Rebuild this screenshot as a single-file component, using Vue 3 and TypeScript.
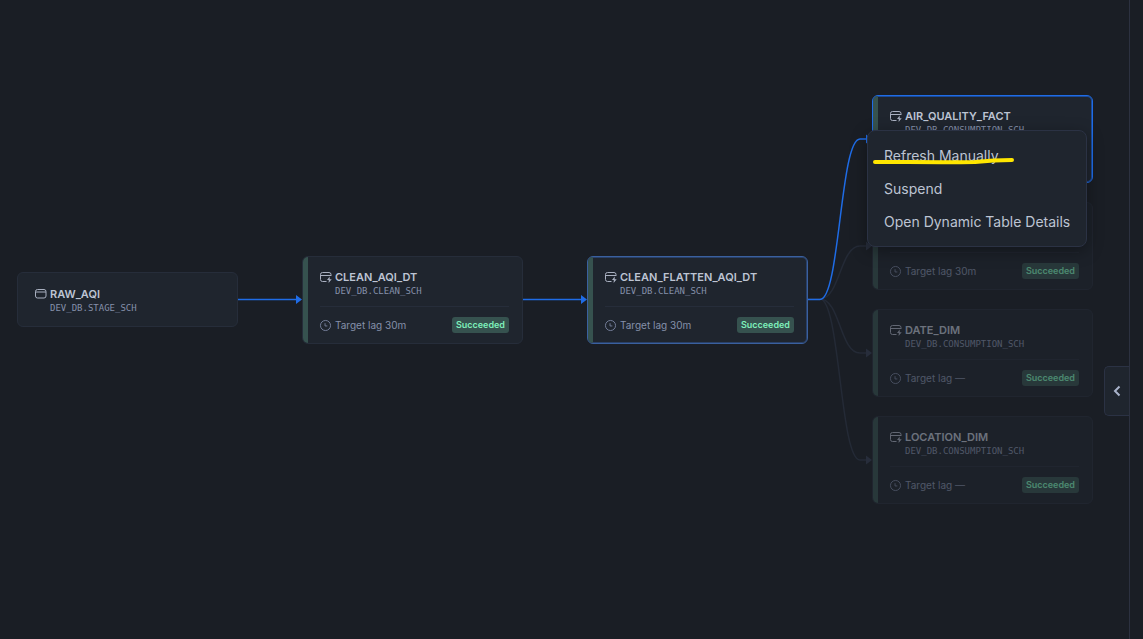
<script setup lang="ts">
interface TableNode {
  id: number
  kind: 'table' | 'dynamic'
  x: number
  y: number
  name?: string
  schema?: string
  lag?: string
  state?: 'active' | 'selected' | 'faded'
}

const nodes: TableNode[] = [
  { id: 1, kind: 'table', name: 'RAW_AQI', schema: 'DEV_DB.STAGE_SCH', x: 17, y: 272 },
  { id: 2, kind: 'dynamic', name: 'CLEAN_AQI_DT', schema: 'DEV_DB.CLEAN_SCH', x: 302, y: 256, lag: '30m' },
  { id: 3, kind: 'dynamic', name: 'CLEAN_FLATTEN_AQI_DT', schema: 'DEV_DB.CLEAN_SCH', x: 587, y: 256, lag: '30m', state: 'active' },
  { id: 4, kind: 'dynamic', name: 'AIR_QUALITY_FACT', schema: 'DEV_DB.CONSUMPTION_SCH', x: 872, y: 95, state: 'selected' },
  { id: 5, kind: 'dynamic', x: 872, y: 202, lag: '30m', state: 'faded' },
  { id: 6, kind: 'dynamic', name: 'DATE_DIM', schema: 'DEV_DB.CONSUMPTION_SCH', x: 872, y: 309, lag: '—', state: 'faded' },
  { id: 7, kind: 'dynamic', name: 'LOCATION_DIM', schema: 'DEV_DB.CONSUMPTION_SCH', x: 872, y: 416, lag: '—', state: 'faded' },
]

const actions = ['Refresh Manually', 'Suspend', 'Open Dynamic Table Details']

const place = (n: TableNode) => ({ left: `${n.x}px`, top: `${n.y}px` })
</script>

<template>
  <div class="app">
    <main class="canvas">
      <svg class="edges" aria-hidden="true">
        <g class="edge dim">
          <path d="M808 299H820C840 299 840 246 860 246H867" />
          <path d="M808 299H820C840 299 840 353 860 353H867" />
          <path d="M808 299H820C840 299 840 460 860 460H867" />
          <path class="head" d="M866 241.500L872 246L866 250.500ZM866 348.500L872 353L866 357.500ZM866 455.500L872 460L866 464.500Z" />
        </g>
        <g class="edge">
          <path d="M238 299.500H298" />
          <path d="M523 299.500H583" />
          <path d="M808 299.500H820C840 299.500 840 139 860 139H867" />
          <path class="head" d="M296 295L302 299.500L296 304ZM581 295L587 299.500L581 304ZM866 134.500L872 139L866 143.500Z" />
        </g>
      </svg>

      <article
        v-for="n in nodes"
        :key="n.id"
        class="node"
        :class="[n.kind, n.state]"
        :style="place(n)"
      >
        <header v-if="n.name" class="head-row">
          <svg class="icon" viewBox="0 0 12 12" aria-hidden="true">
            <template v-if="n.kind === 'dynamic'">
              <path d="M6.500 10.500H2.500Q.5 10.500 .5 8.500V3.500Q.5 1.500 2.500 1.500H9Q11 1.500 11 3.500V5M.5 4.500H11" />
              <path class="bolt" d="M9.700 5.500L7 9H8.800L8.600 12L11.700 8.200H9.700Z" />
            </template>
            <template v-else>
              <rect x=".5" y="1.500" width="10.500" height="8.500" rx="2" />
              <path d="M.5 4H11" />
            </template>
          </svg>
          <h2>{{ n.name }}</h2>
        </header>
        <p v-if="n.schema" class="schema">{{ n.schema }}</p>
        <footer v-if="n.lag" class="foot-row">
          <svg class="icon clock" viewBox="0 0 12 12" aria-hidden="true">
            <circle cx="6" cy="6" r="5.500" />
            <path d="M5.500 3.500V6.500H8" />
          </svg>
          <span class="lag">Target lag {{ n.lag }}</span>
          <span class="badge">Succeeded</span>
        </footer>
      </article>

      <div class="menu" role="menu">
        <button v-for="a in actions" :key="a" type="button" role="menuitem">{{ a }}</button>
        <svg class="marker" viewBox="0 0 146 10" aria-hidden="true">
          <path d="M4 7C35 7 75 7.500 104 7C118 5.500 128 5 141 5" />
        </svg>
      </div>

      <button class="expand" type="button" aria-label="Expand panel">
        <svg viewBox="0 0 8 12" aria-hidden="true"><path d="M6.500 1.500L2 6L6.500 10.500" /></svg>
      </button>
    </main>
    <aside class="panel"></aside>
  </div>
</template>

<style>
body {
  background: #1a1e25;
}
</style>

<style scoped>
.app {
  display: flex;
  min-height: 100vh;
  background: #1a1e25;
  color: #bdc4d3;
  font-family: Inter, "Liberation Sans", sans-serif;
}

.canvas {
  position: relative;
  flex: 1;
  overflow: hidden;
}

.panel {
  box-sizing: border-box;
  width: 14px;
  border-left: 1px solid #2c3140;
}

.edges {
  position: absolute;
  inset: 0;
  width: 100%;
  height: 100%;
}

.edge {
  fill: none;
  stroke: #1f6ce6;
  stroke-width: 1.5px;
}

.edge .head {
  fill: #1f6ce6;
  stroke: none;
}

.edge.dim {
  stroke: #242a36;
}

.edge.dim .head {
  fill: #272d3b;
}

.node {
  position: absolute;
  display: flex;
  flex-direction: column;
  box-sizing: border-box;
  width: 221px;
  padding: 14px 13px 11px 17px;
  overflow: hidden;
  background: #1f252e;
  border: 1px solid #262d3a;
  border-radius: 6px;
}

.node.dynamic {
  min-height: 88px;
  padding-top: 13px;
  padding-bottom: 10px;
}

.node.dynamic::before {
  position: absolute;
  inset: 0 auto 0 0;
  width: 5px;
  background: #36524f;
  content: "";
}

.node.active {
  border-color: #3a609f;
  box-shadow: 0 0 0 1px #294068 inset;
}

.node.selected {
  border-color: #1f6ce6;
  box-shadow: 0 0 0 1px #1b4a98 inset;
}

.node.faded {
  opacity: 0.5;
}

.head-row,
.foot-row {
  display: flex;
  align-items: center;
}

h2 {
  margin: 0;
  font-size: 11px;
  font-weight: 600;
  line-height: 14px;
}

.icon {
  width: 12px;
  height: 12px;
  margin-right: 3px;
  overflow: visible;
  fill: none;
  stroke: #a9b0c0;
  stroke-width: 1;
}

.bolt {
  fill: #a9b0c0;
  stroke: none;
}

.icon.clock {
  width: 11px;
  height: 11px;
  margin-right: 4px;
  stroke: #7983a0;
}

.schema {
  margin: 0 0 0 15px;
  color: #8590aa;
  font-family: "DejaVu Sans Mono", monospace;
  font-size: 9px;
  line-height: 14px;
}

.foot-row {
  margin-top: auto;
  padding-top: 10px;
  border-top: 1px solid #262d3a;
}

.lag {
  color: #8590aa;
  font-size: 10px;
  line-height: 16px;
}

.badge {
  margin-left: auto;
  padding: 0 4px;
  background: #36524f;
  border-radius: 3px;
  color: #7eefbb;
  font-size: 9px;
  font-weight: 600;
  line-height: 16px;
}

.menu {
  position: absolute;
  top: 130px;
  left: 867px;
  box-sizing: border-box;
  width: 220px;
  padding: 8px 0;
  background: #1f252e;
  border: 1px solid #2b3244;
  border-radius: 8px;
  box-shadow: 0 4px 16px rgb(0 0 0 / 35%);
}

.menu button {
  display: block;
  width: 100%;
  padding: 0 16px;
  background: none;
  border: 0;
  color: #bdc4d3;
  font: 400 14px/33px Inter, "Liberation Sans", sans-serif;
  text-align: left;
  white-space: nowrap;
}

.marker {
  position: absolute;
  top: 24px;
  left: 3px;
  width: 146px;
  height: 10px;
  fill: none;
  stroke: #ffe600;
  stroke-width: 4;
  stroke-linecap: round;
}

.expand {
  position: absolute;
  top: 366px;
  right: 0;
  display: flex;
  align-items: center;
  justify-content: center;
  box-sizing: border-box;
  width: 25px;
  height: 50px;
  padding: 0;
  background: #1f252e;
  border: 1px solid #2b3244;
  border-right: 0;
  border-radius: 5px 0 0 5px;
}

.expand svg {
  width: 8px;
  height: 12px;
  fill: none;
  stroke: #a9b3cb;
  stroke-width: 2;
}
</style>
